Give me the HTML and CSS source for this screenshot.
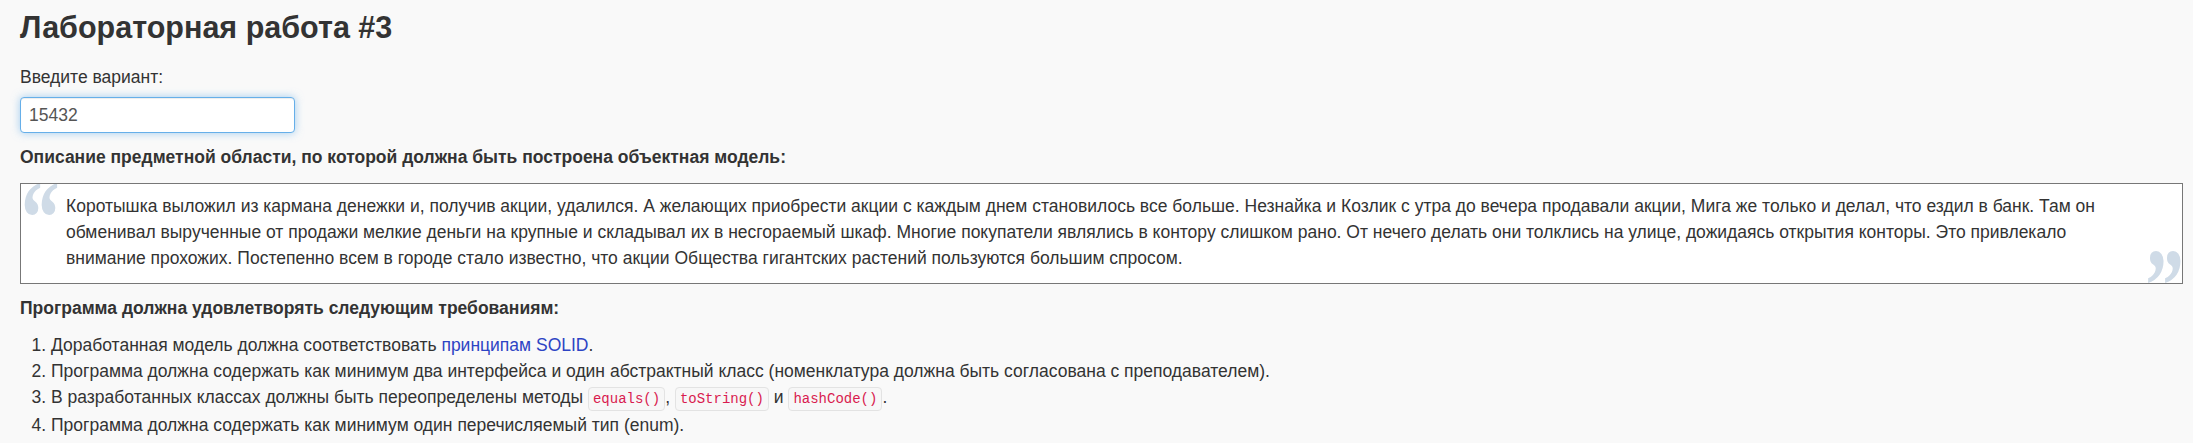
FILE: index.html
```html
<!DOCTYPE html>
<html lang="ru">
<head>
<meta charset="utf-8">
<title>Лабораторная работа #3</title>
<link rel="stylesheet" href="styles.css">
</head>
<body>
<main class="page">
  <h1 class="title">Лабораторная работа #3</h1>
  <label class="field-label" for="variant">Введите вариант:</label>
  <input class="field-input" id="variant" type="text" value="15432">
  <p class="section-title">Описание предметной области, по которой должна быть построена объектная модель:</p>
  <blockquote class="quote">Коротышка выложил из кармана денежки и, получив акции, удалился. А желающих приобрести акции с каждым днем становилось все больше. Незнайка и Козлик с утра до вечера продавали акции, Мига же только и делал, что ездил в банк. Там он обменивал вырученные от продажи мелкие деньги на крупные и складывал их в несгораемый шкаф. Многие покупатели являлись в контору слишком рано. От нечего делать они толклись на улице, дожидаясь открытия конторы. Это привлекало внимание прохожих. Постепенно всем в городе стало известно, что акции Общества гигантских растений пользуются большим спросом.</blockquote>
  <p class="section-title">Программа должна удовлетворять следующим требованиям:</p>
  <ol class="reqs">
    <li>Доработанная модель должна соответствовать <a class="link" href="#">принципам SOLID</a>.</li>
    <li>Программа должна содержать как минимум два интерфейса и один абстрактный класс (номенклатура должна быть согласована с преподавателем).</li>
    <li>В разработанных классах должны быть переопределены методы <code class="code">equals()</code>, <code class="code">toString()</code> и <code class="code">hashCode()</code>.</li>
    <li>Программа должна содержать как минимум один перечисляемый тип (enum).</li>
  </ol>
</main>
</body>
</html>
```
FILE: styles.css
```css
html, body {
  margin: 0;
  padding: 0;
  background: #f9f9f9;
}
body {
  font-family: "Liberation Sans", Arial, sans-serif;
  font-size: 17.5px;
  line-height: 26px;
  color: #333;
}
.page {
  padding: 11px 10px 0 20px;
  display: flex;
  flex-direction: column;
  align-items: flex-start;
}
.title {
  margin: 0;
  font-size: 30.5px;
  line-height: 33px;
  font-weight: bold;
  color: #333;
}
.field-label {
  margin-top: 20px;
  display: block;
}
.field-input {
  margin-top: 7px;
  box-sizing: border-box;
  width: 275px;
  height: 36px;
  padding: 0 8px;
  border: 1px solid #66afe9;
  border-radius: 4px;
  background: #fff;
  font-family: "Liberation Sans", Arial, sans-serif;
  font-size: 17.5px;
  color: #555;
  outline: none;
  box-shadow: inset 0 1px 1px rgba(0,0,0,.075), 0 0 8px rgba(102,175,233,.6);
}
.section-title {
  margin: 11px 0 0;
  font-weight: bold;
}
.quote {
  position: relative;
  align-self: stretch;
  margin: 13px 0 0;
  padding: 9px 40px 12px 45px;
  border: 1px solid #777;
  background: #fff;
  overflow: hidden;
}
.quote::before,
.quote::after {
  position: absolute;
  font-family: "Liberation Serif", "Times New Roman", serif;
  font-weight: bold;
  font-size: 84px;
  line-height: 84px;
  height: 84px;
  color: #cfdbe7;
}
.quote::before {
  content: "\201C";
  left: 0;
  top: -18px;
  transform-origin: left top;
  transform: scale(0.92, 1.25);
}
.quote::after {
  content: "\201D";
  right: -2px;
  bottom: -56px;
  transform-origin: right bottom;
  transform: scale(0.92, 1.25);
}
.reqs {
  margin: 11px 0 0;
  padding-left: 31px;
}
.link {
  color: #2d44c4;
  text-decoration: none;
}
.code {
  font-family: "Liberation Mono", "Courier New", monospace;
  font-size: 14px;
  padding: 3px 4px;
  color: #d91b4f;
  background: #f7f7f7;
  border: 1px solid #e3e3e3;
  border-radius: 4px;
}
```
